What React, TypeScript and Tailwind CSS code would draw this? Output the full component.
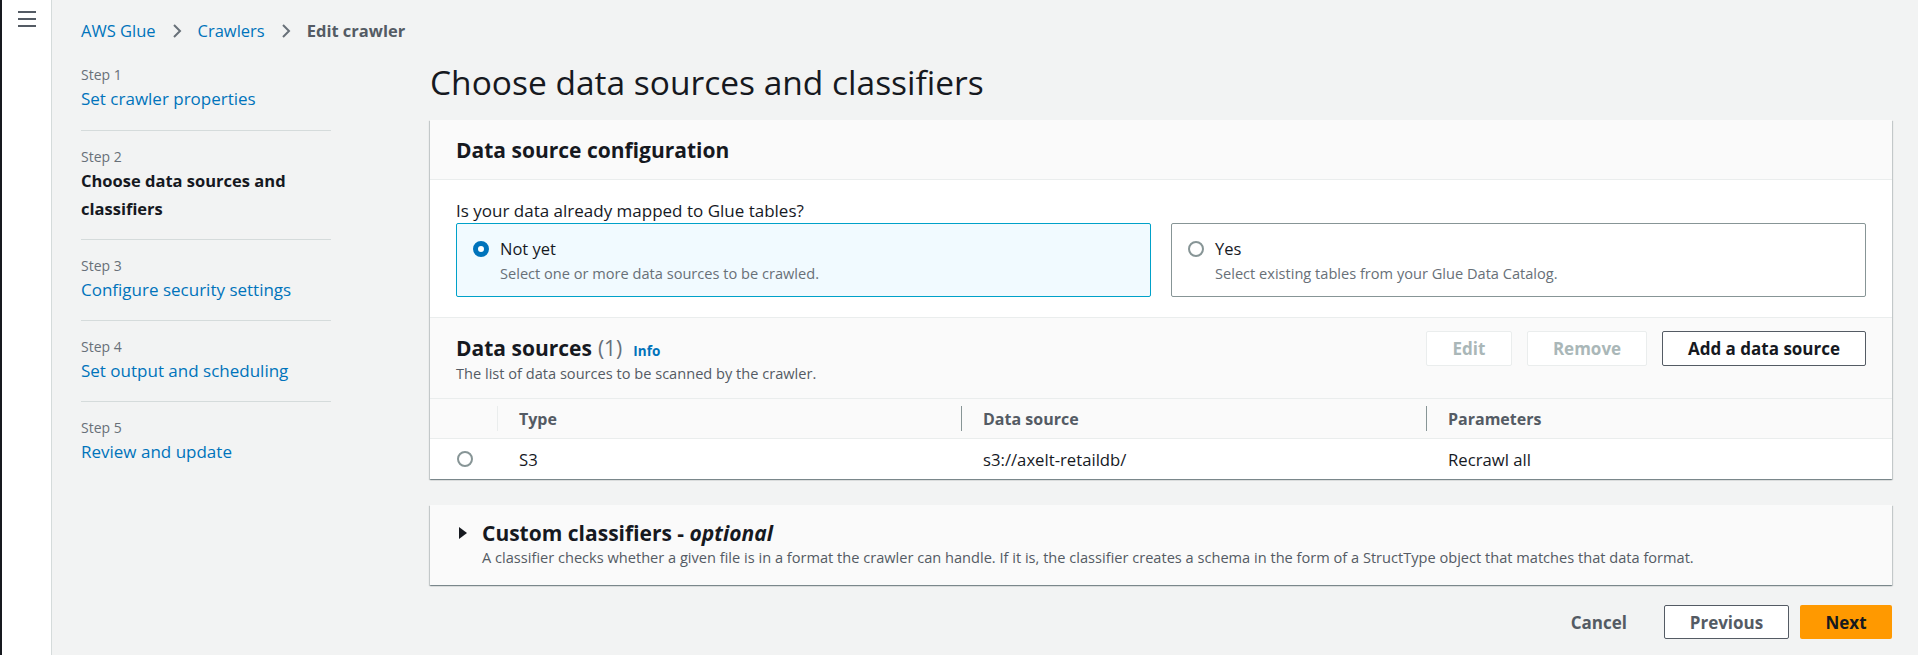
import React from "react";

const steps = [
  { n: 1, label: "Set crawler properties" },
  { n: 2, label: "Choose data sources and classifiers", current: true },
  { n: 3, label: "Configure security settings" },
  { n: 4, label: "Set output and scheduling" },
  { n: 5, label: "Review and update" },
];

const cardShadow =
  "shadow-[0_1px_1px_0_rgba(0,28,36,0.3),1px_1px_1px_0_rgba(0,28,36,0.15),-1px_1px_1px_0_rgba(0,28,36,0.15)]";

function Chevron() {
  return (
    <svg width="10" height="16" viewBox="0 0 10 16" className="mx-[16px]">
      <path d="M2 2l6 6-6 6" fill="none" stroke="#687078" strokeWidth="2" />
    </svg>
  );
}

function Radio({ checked }: { checked?: boolean }) {
  if (checked) {
    return <span className="block h-[16px] w-[16px] shrink-0 rounded-full border-[5px] border-[#0073bb] bg-white" />;
  }
  return <span className="block h-[16px] w-[16px] shrink-0 rounded-full border-2 border-[#879596] bg-white" />;
}

function Tile({ title, desc, checked }: { title: string; desc: string; checked?: boolean }) {
  return (
    <div
      className={
        checked
          ? "h-[74px] rounded-[2px] border border-[#00a1c9] bg-[#f1faff] px-[16px] pt-[14px]"
          : "h-[74px] rounded-[2px] border border-[#879596] bg-white px-[16px] pt-[14px]"
      }
    >
      <div className="flex items-center gap-[11px]">
        <Radio checked={checked} />
        <span className="text-[16.5px] leading-[22px] text-[#16191f]">{title}</span>
      </div>
      <div className="mt-[3px] pl-[27px] text-[14.6px] leading-[20px] text-[#687078]">{desc}</div>
    </div>
  );
}

function HeadCell({ label, dark }: { label: string; dark?: boolean }) {
  return (
    <div className="flex h-[39px] items-center">
      <span className={dark ? "h-[25px] w-px bg-[#879596]" : "h-[25px] w-px bg-[#eaeded]"} />
      <span className="ml-[21px] text-[16px] font-bold text-[#545b64]">{label}</span>
    </div>
  );
}

export default function App() {
  return (
    <div className="flex min-h-[655px] bg-[#f2f3f3] font-['Open_Sans',sans-serif] text-[#16191f]">
      <div className="flex w-[52px] shrink-0 justify-center border-l-2 border-r border-l-[#16191f] border-r-[#d5dbdb] bg-white pt-[10px]">
        <svg width="18" height="18" viewBox="0 0 18 18">
          <path d="M0 2h18M0 9h18M0 16h18" stroke="#545b64" strokeWidth="2" />
        </svg>
      </div>

      <div className="flex-1 pl-[29px] pr-[26px] pt-[20px]">
        <nav className="flex h-[22px] items-center text-[16.5px] leading-[22px]">
          <span className="text-[#0073bb]">AWS Glue</span>
          <Chevron />
          <span className="text-[#0073bb]">Crawlers</span>
          <Chevron />
          <span className="font-bold text-[#545b64]">Edit crawler</span>
        </nav>

        <div className="mt-[22px] flex">
          <ol className="w-[250px] shrink-0">
            {steps.map((s, i) => (
              <li
                key={s.n}
                className={i === 0 ? "pb-[17px] pt-[1px]" : "border-t border-[#d5dbdb] pb-[16px] pt-[16px]"}
              >
                <div className="text-[14px] leading-[20px] text-[#687078]">Step {s.n}</div>
                <div
                  className={
                    s.current
                      ? "text-[16.5px] font-bold leading-[28px] text-[#16191f]"
                      : "text-[17px] leading-[28px] text-[#0073bb]"
                  }
                >
                  {s.label}
                </div>
              </li>
            ))}
          </ol>

          <main className="ml-[99px] flex-1">
            <h1 className="text-[33.5px] font-normal leading-[36px] text-[#16191f]">
              Choose data sources and classifiers
            </h1>

            <section className={`mt-[20px] bg-white ${cardShadow}`}>
              <div className="flex h-[60px] items-center border-b border-[#eaeded] bg-[#fafafa] px-[26px]">
                <h2 className="text-[21px] font-bold leading-[26px]">Data source configuration</h2>
              </div>
              <div className="px-[26px] pb-[20px] pt-[20px]">
                <div className="text-[17px] leading-[22px]">Is your data already mapped to Glue tables?</div>
                <div className="mt-[1px] grid grid-cols-2 gap-[20px]">
                  <Tile checked title="Not yet" desc="Select one or more data sources to be crawled." />
                  <Tile title="Yes" desc="Select existing tables from your Glue Data Catalog." />
                </div>
              </div>

              <div className="flex items-start justify-between border-t border-[#eaeded] bg-[#fafafa] px-[26px] pb-[15px] pt-[13px]">
                <div className="pt-[4px]">
                  <div className="flex items-baseline">
                    <h2 className="text-[21px] font-bold leading-[26px]">Data sources</h2>
                    <span className="ml-[6px] text-[21px] leading-[26px] text-[#687078]">(1)</span>
                    <span className="ml-[11px] text-[13.5px] font-bold text-[#0073bb]">Info</span>
                  </div>
                  <div className="mt-[2px] text-[14.6px] leading-[20px] text-[#545b64]">
                    The list of data sources to be scanned by the crawler.
                  </div>
                </div>
                <div className="flex gap-[15px]">
                  <button className="h-[35px] w-[86px] rounded-[2px] border border-[#eaeded] bg-white text-[17px] font-bold text-[#aab7b8]">
                    Edit
                  </button>
                  <button className="h-[35px] w-[120px] rounded-[2px] border border-[#eaeded] bg-white text-[17px] font-bold text-[#aab7b8]">
                    Remove
                  </button>
                  <button className="h-[35px] w-[204px] rounded-[2px] border border-[#545b64] bg-white text-[17px] font-bold text-[#16191f]">
                    Add a data source
                  </button>
                </div>
              </div>

              <div className="grid grid-cols-[67px_464px_465px_1fr] border-t border-[#eaeded] bg-[#fafafa]">
                <div />
                <HeadCell label="Type" />
                <HeadCell label="Data source" dark />
                <HeadCell label="Parameters" dark />
              </div>
              <div className="grid h-[41px] grid-cols-[67px_464px_465px_1fr] items-center border-t border-[#eaeded] text-[16.7px]">
                <div className="flex justify-center pl-[2px]">
                  <Radio />
                </div>
                <div className="pl-[22px]">S3</div>
                <div className="pl-[22px]">s3://axelt-retaildb/</div>
                <div className="pl-[22px]">Recrawl all</div>
              </div>
            </section>

            <section className={`mt-[26px] h-[80px] bg-[#fafafa] px-[26px] pt-[14px] ${cardShadow}`}>
              <div className="flex items-center">
                <svg width="10" height="12" viewBox="0 0 10 12" className="ml-[2px] mr-[14px]">
                  <path d="M1 0l8 6-8 6z" fill="#16191f" />
                </svg>
                <h2 className="text-[21px] font-bold leading-[28px]">
                  Custom classifiers - <i>optional</i>
                </h2>
              </div>
              <div className="pl-[26px] text-[14.6px] leading-[20px] text-[#545b64]">
                A classifier checks whether a given file is in a format the crawler can handle. If it is, the
                classifier creates a schema in the form of a StructType object that matches that data format.
              </div>
            </section>

            <div className="mt-[20px] flex justify-end gap-[11px]">
              <button className="h-[34px] pl-[20px] pr-[26px] text-[17px] font-bold text-[#545b64]">Cancel</button>
              <button className="h-[34px] w-[125px] rounded-[2px] border border-[#545b64] bg-white text-[17px] font-bold text-[#545b64]">
                Previous
              </button>
              <button className="h-[34px] w-[92px] rounded-[2px] bg-[#ff9900] text-[17px] font-bold text-[#16191f]">
                Next
              </button>
            </div>
          </main>
        </div>
      </div>
    </div>
  );
}
